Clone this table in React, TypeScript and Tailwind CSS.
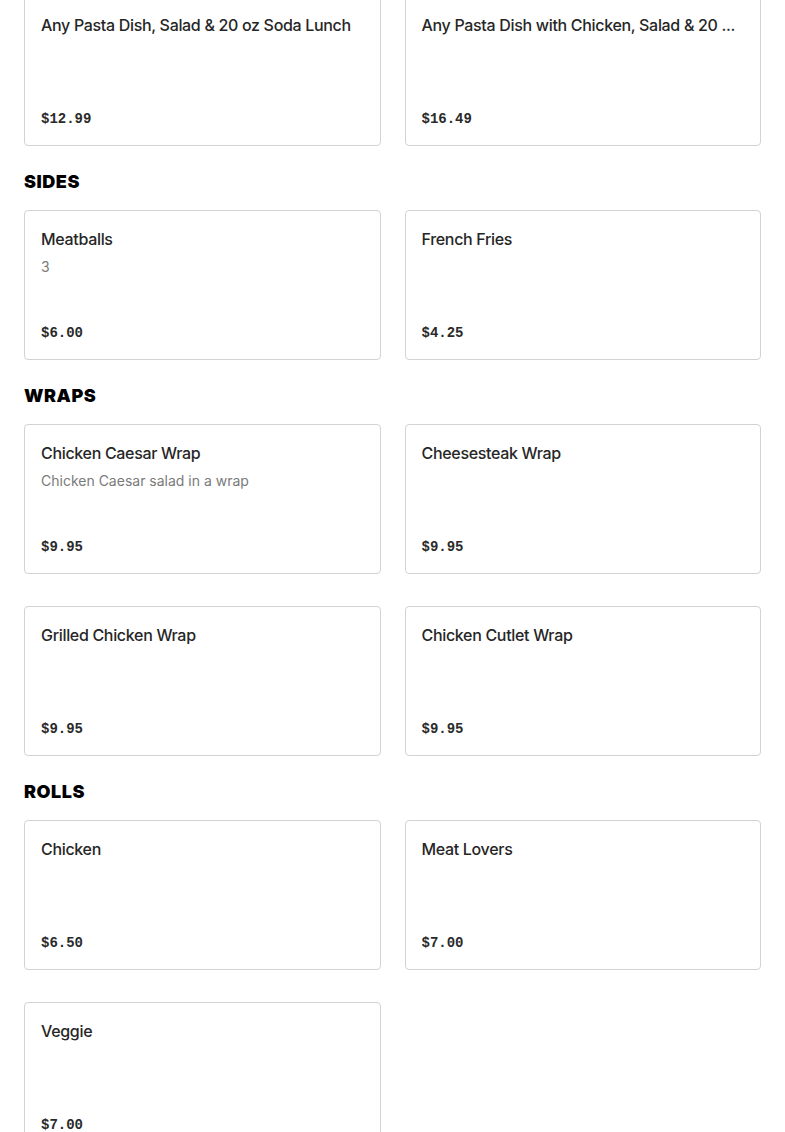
type Item = { name: string; description?: string; price: string }
type Section = { title?: string; items: Item[] }

const sections: Section[] = [
    {
        items: [
            { name: "Any Pasta Dish, Salad & 20 oz Soda Lunch", price: "$12.99" },
            { name: "Any Pasta Dish with Chicken, Salad & 20 oz Soda Lunch", price: "$16.49" },
        ],
    },
    {
        title: "Sides",
        items: [
            { name: "Meatballs", description: "3", price: "$6.00" },
            { name: "French Fries", price: "$4.25" },
        ],
    },
    {
        title: "Wraps",
        items: [
            { name: "Chicken Caesar Wrap", description: "Chicken Caesar salad in a wrap", price: "$9.95" },
            { name: "Cheesesteak Wrap", price: "$9.95" },
            { name: "Grilled Chicken Wrap", price: "$9.95" },
            { name: "Chicken Cutlet Wrap", price: "$9.95" },
        ],
    },
    {
        title: "Rolls",
        items: [
            { name: "Chicken", price: "$6.50" },
            { name: "Meat Lovers", price: "$7.00" },
            { name: "Veggie", price: "$7.00" },
        ],
    },
]

const truncate = (s: string) => (s.length > 40 ? s.slice(0, 40) + "..." : s)

function MenuCard({ item }: { item: Item }) {
    return (
        <div className="h-[150px] flex flex-col justify-between border border-[#d3d3d3] rounded-[4px] bg-white p-4">
            <div>
                <h3 className="text-[16px] leading-6 font-medium tracking-[-0.02em] text-[#262626] whitespace-nowrap">
                    {truncate(item.name)}
                </h3>
                {item.description && (
                    <p className="mt-[6px] text-[14px] leading-5 text-[#7a7a7a]">{item.description}</p>
                )}
            </div>
            <span className="font-['Liberation_Mono',monospace] font-bold text-[14px] leading-5 text-[#2a2a2a]">
                {item.price}
            </span>
        </div>
    )
}

export default function App() {
    return (
        <div className="min-h-screen bg-white px-6 -mt-[4px] font-['Inter',sans-serif]">
            {sections.map((section, i) => (
                <section key={i}>
                    {section.title && (
                        <h2 className="mt-6 mb-4 text-[18px] leading-6 font-black uppercase text-black tracking-[0.03em]">
                            {section.title}
                        </h2>
                    )}
                    <div className="grid grid-cols-2 gap-x-6 gap-y-8">
                        {section.items.map((item) => (
                            <MenuCard key={item.name} item={item} />
                        ))}
                    </div>
                </section>
            ))}
        </div>
    )
}
